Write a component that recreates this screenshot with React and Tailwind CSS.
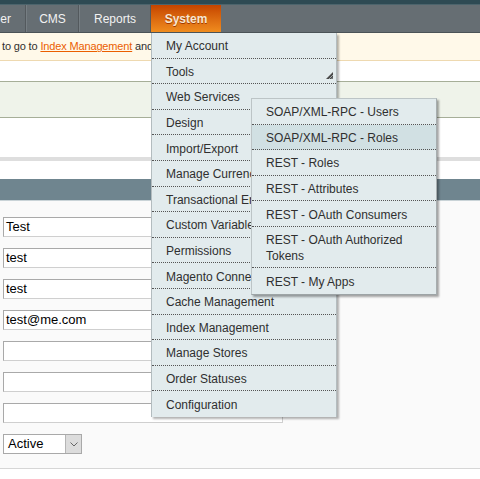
const navItems = [
  { label: "CMS", w: "w-[53px]" },
  { label: "Reports", w: "w-[72px]" },
];

const systemMenu = [
  "My Account",
  "Tools",
  "Web Services",
  "Design",
  "Import/Export",
  "Manage Currency",
  "Transactional Emails",
  "Custom Variables",
  "Permissions",
  "Magento Connect",
  "Cache Management",
  "Index Management",
  "Manage Stores",
  "Order Statuses",
  "Configuration",
];

const webServices = [
  { label: "SOAP/XML-RPC - Users" },
  { label: "SOAP/XML-RPC - Roles", active: true },
  { label: "REST - Roles" },
  { label: "REST - Attributes" },
  { label: "REST - OAuth Consumers" },
  { label: "REST - OAuth Authorized Tokens", tall: true },
  { label: "REST - My Apps", last: true },
];

const fields = ["Test", "test", "test", "test@me.com", "", "", ""];

const Corner = () => (
  <svg width="7" height="7" viewBox="0 0 7 7" className="absolute right-[3px] bottom-[4px]">
    <polygon points="7,0 7,7 0,7" fill="#4a4a4a" />
    <line x1="7" y1="3" x2="3" y2="7" stroke="#b8c2c4" strokeWidth="0.8" />
    <line x1="7" y1="5.5" x2="5.5" y2="7" stroke="#b8c2c4" strokeWidth="0.8" />
  </svg>
);

export default function App() {
  return (
    <div className="relative w-[480px] h-[479px] overflow-hidden bg-white font-['Liberation_Sans',Arial,sans-serif] text-[12px] text-[#2f2f2f]">
      <div className="h-[5px] bg-[#2e4a53] border-b border-[#4c646c]" />

      <nav className="h-[28px] flex bg-[#666e73] border-b border-[#4b5357] text-[#f2f2f2]">
        <div className="w-[26px] flex items-center justify-end pr-[14px] border-r border-[#53595d]">
          er
        </div>
        {navItems.map((item) => (
          <div
            key={item.label}
            className={`${item.w} flex items-center justify-center border-r border-[#53595d] border-l border-l-[#767e83]`}
          >
            {item.label}
          </div>
        ))}
        <div className="w-[70px] flex items-center justify-center font-bold text-[#f7e6d2] bg-gradient-to-b from-[#c54400] to-[#f08c1e] [text-shadow:0_1px_0_#a03a00]">
          System
        </div>
      </nav>

      <div className="h-[28px] flex items-center bg-[#fff9e9] border-b border-[#eed9b0]">
        <div className="w-[151px] overflow-hidden whitespace-nowrap pl-[2px] text-[11px] tracking-[-0.15px]">
          to go to <span className="text-[#eb5e00] underline">Index Management</span> and
        </div>
      </div>
      <div className="h-[20px]" />
      <div className="h-[37px] bg-[#eff3ea] border-y border-[#a6ae98]" />
      <div className="h-[39px]" />
      <div className="h-[4px] bg-[#dedede]" />
      <div className="h-[18px]" />
      <div className="h-[22px] bg-[#6f858f] border-b border-[#c9d3d7]" />

      <form className="bg-[#fafafa] pt-[16px] pl-[3px] pb-[14px] border-b border-[#d6d6d6] flex flex-col gap-[11px]">
        {fields.map((value, i) => (
          <div
            key={i}
            className="w-[280px] h-[20px] bg-white border border-[#a9a9a9] border-r-[#cfcfcf] border-b-[#cfcfcf] flex items-center pl-[2px] text-[13px] text-black"
          >
            {value}
          </div>
        ))}
        <div className="w-[79px] h-[20px] bg-white border border-[#a9a9a9] flex items-center text-[13px] text-black">
          <span className="flex-1 pl-[4px]">Active</span>
          <span className="w-[16px] h-full bg-[#dcdcdc] border-l border-[#b5b5b5] flex items-center justify-center">
            <svg width="8" height="5" viewBox="0 0 8 5">
              <polyline points="0.5,0.5 4,4 7.5,0.5" fill="none" stroke="#666" strokeWidth="1" />
            </svg>
          </span>
        </div>
      </form>

      <ul className="absolute left-[151px] top-[33px] w-[186px] bg-[#e2ebed] border-l border-[#b3bcbf] border-r border-[#a2a9ab] shadow-[2px_2px_2px_rgba(0,0,0,0.3)]">
        {systemMenu.map((label, i) => (
          <li
            key={label}
            className={`relative h-[25.6px] flex items-center pl-[14px] pt-[2px] whitespace-nowrap ${
              i < systemMenu.length - 1 ? "border-b border-dotted border-[#555]" : ""
            }`}
          >
            {label}
            {label === "Tools" && <Corner />}
          </li>
        ))}
      </ul>

      <ul className="absolute left-[251px] top-[98px] w-[186px] bg-[#e2ebed] border border-[#bcc4c6] border-r-[#a6adaf] border-b-[#9da4a6] shadow-[2px_2px_2px_rgba(0,0,0,0.35)]">
        {webServices.map((item) => (
          <li
            key={item.label}
            className={`flex items-center pl-[14px] pr-[10px] pt-[2px] leading-[16px] ${
              item.tall ? "h-[41px]" : "h-[25.6px]"
            } ${item.active ? "bg-[#d1e0e3]" : ""} ${
              item.last ? "" : "border-b border-dotted border-[#555]"
            }`}
          >
            {item.label}
          </li>
        ))}
      </ul>
    </div>
  );
}
